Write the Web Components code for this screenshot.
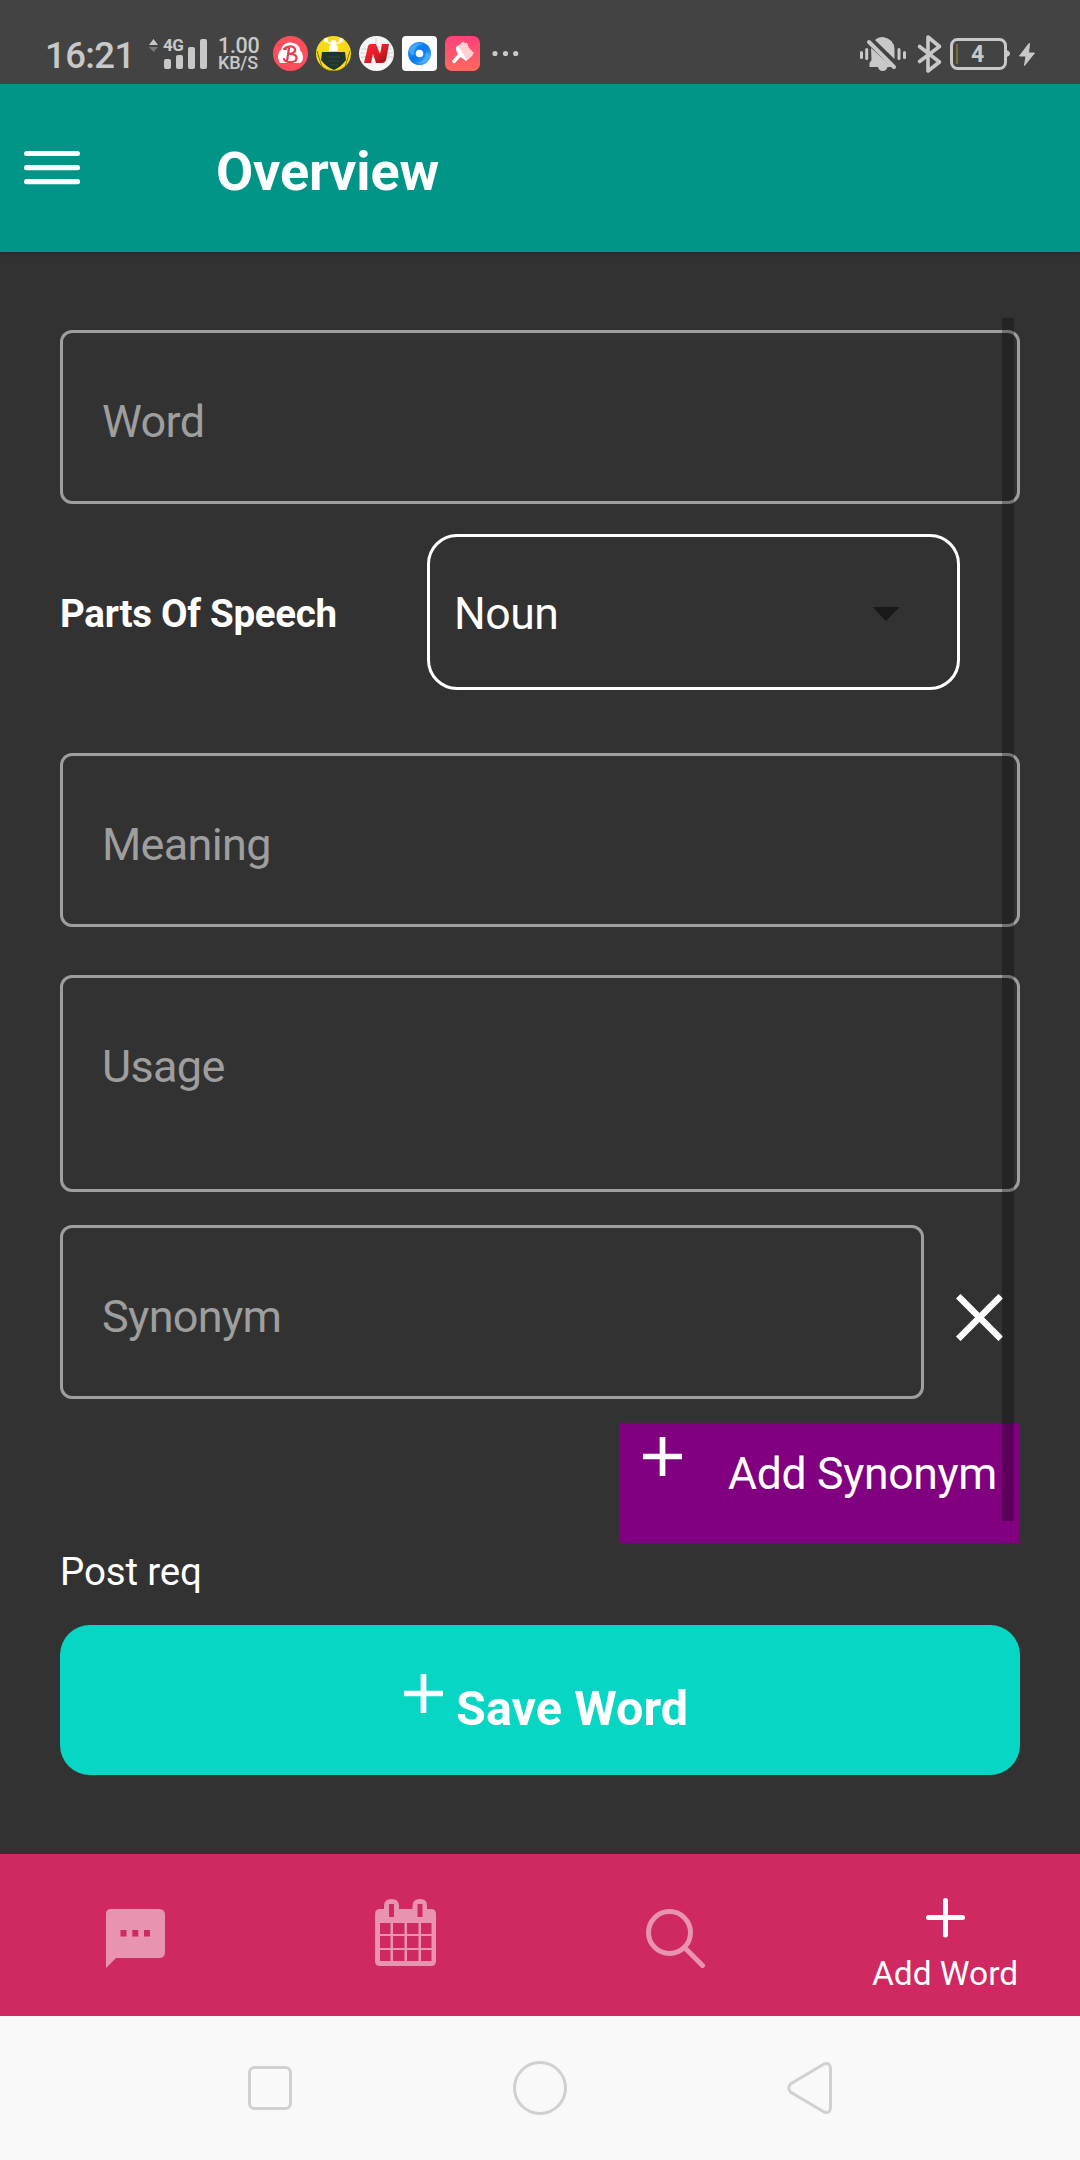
<!DOCTYPE html>
<html lang="en">
<head>
<meta charset="utf-8">
<title>Overview</title>
<style>
body{margin:0;width:1080px;height:2160px;overflow:hidden;background:#323232;font-family:Roboto,sans-serif;color:#fff}
</style>
</head>
<body>
<word-app></word-app>
<script>
const define = (name, html) => customElements.define(name, class extends HTMLElement {
  constructor() {
    super();
    const t = document.createElement('template');
    t.innerHTML = '<style>:host{display:block;box-sizing:border-box}*{box-sizing:border-box}svg{display:block;flex:none}</style>' + html;
    this.attachShadow({mode: 'open'}).append(t.content.cloneNode(true));
  }
});

define('status-bar', `
<style>
:host{display:flex;height:84px;background:#434343;color:#c8c8c8;font-weight:500}
span{display:block;white-space:nowrap;flex:none}
.time{width:102px;margin-left:45px;font-size:36.500px;line-height:36px;padding-top:38px;letter-spacing:-.6px}
.net{display:flex;flex-direction:column;width:50px;padding-top:37px}
.net .a{font-size:21.500px;line-height:17px;height:17px;letter-spacing:-.3px}
.net .b{font-size:18px;line-height:16px;margin-top:1px;letter-spacing:-.2px}
.sig{display:grid;width:71px}
.sig>*{grid-area:1/1}
.g4{font-size:17px;font-weight:700;line-height:18px;padding:36px 0 0 16px;letter-spacing:-.5px}
.bat{display:grid;width:66px;margin-left:auto}
.bat>*{grid-area:1/1}
.bat span{font-size:23px;font-weight:700;line-height:24px;padding:43px 5px 0 0;width:66px;text-align:center}
.right{display:flex;margin-left:auto}
</style>
<span class="time">16:21</span>
<div class="sig">
<svg width="71" height="84" viewBox="147 0 71 84"><path d="M149 45l4.500-6 4.500 6z" fill="#c8c8c8"/><path d="M149 47h9l-4.500 5z" fill="#777"/><g fill="#c8c8c8"><rect x="164" y="59" width="7" height="10" rx="2"/><rect x="176" y="55" width="7" height="14" rx="2"/><rect x="188" y="47" width="7" height="22" rx="2"/><rect x="200" y="39" width="7" height="30" rx="2"/></g></svg>
<span class="g4">4G</span></div>
<div class="net"><span class="a">1.00</span><span class="b">KB/S</span></div>
<svg width="262" height="84" viewBox="268 0 262 84">
<defs>
<linearGradient id="p" x1="0" y1="0" x2="0" y2="1"><stop stop-color="#ff417b"/><stop offset="1" stop-color="#ff6a5d"/></linearGradient>
<linearGradient id="n" x1="0" y1="0" x2="1" y2="1"><stop stop-color="#f32835"/><stop offset=".5" stop-color="#e51d27"/><stop offset="1" stop-color="#8d1018"/></linearGradient>
<linearGradient id="o" x1="0" y1="0" x2="1" y2="1"><stop stop-color="#2d9bf8"/><stop offset=".5" stop-color="#0878ee"/><stop offset="1" stop-color="#49b7fb"/></linearGradient>
<clipPath id="c"><circle cx="333.500" cy="53.500" r="17.500"/></clipPath>
</defs>
<circle cx="290.500" cy="53.500" r="17.500" fill="#ff4d5b"/>
<path d="M280 63C276 57 279 51 281 50C283 42 290 41 296 44C299 46 300 48 300 50C304 54 304 61 300 63Z" fill="#fff"/>
<path d="M284 49C288 45 294 46 295 49C296 53 291 54 288 54C294 53 298 56 296 60C294 63 285 63 284 59M289 48L287 61M284 49h2" fill="none" stroke="#e34150" stroke-width="2.200" stroke-linecap="round"/>
<circle cx="333.500" cy="53.500" r="17.500" fill="#f8da18"/>
<g clip-path="url(#c)"><path d="M322 52H345L346 60Q341 67 334 70Q326 67 321 60Z" fill="#20352d"/><path d="M327 57h13M328 61h11M330 65h8" stroke="#344c3f" stroke-width="1.200"/><path d="M317 51L322 67Q327 71 334 71Q341 71 345 67L350 51" fill="none" stroke="#7d7420" stroke-width="1"/><path d="M329 51v-4l2-3v-3q2.500-2 5 0v3l2 3v4z" fill="#fff"/><path d="M325 40l4 3h10l4-3" fill="none" stroke="#fff" stroke-width="1.300"/><circle cx="326" cy="40" r="2.200" fill="#fff"/><circle cx="341" cy="40" r="2.200" fill="#fff"/></g>
<circle cx="376.500" cy="53.500" r="17.500" fill="#f5f5f5"/><path d="M361 49h6M360 53h5M361 57h5M385 49h7M387 53h7M386 57h7M376 38v6" stroke="#ddd" stroke-width="1.500"/>
<path d="M364 63L368 46Q368.500 44 371 44H376L380 54L382 44H389L386 60Q385 63 382 63H376L373 54L371 63Z" fill="url(#n)"/>
<rect x="402" y="36" width="35" height="35" rx="4" fill="#fbfbfb"/><circle cx="419.500" cy="53.500" r="11.500" fill="url(#o)"/><path d="M409 50Q414 41 423 44Q414 45 414 55Q410 56 409 50M430 57Q426 65 417 63Q425 62 426 53Q430 52 430 57" fill="#65bdff" opacity=".55"/><circle cx="419.500" cy="53.500" r="3.800" fill="#fff"/>
<rect x="445" y="36" width="35" height="35" rx="7" fill="url(#p)"/>
<path d="M456 47L461 44L473 55L466 61L460.500 57L455 63Q453 64 452 61L458 54L456 50Z" fill="#fff"/><path d="M458 46L463 41.500L464.500 43L467 43L469 48L474 53L467 60Z" fill="#ffd0d4"/>
<g fill="#c8c8c8"><circle cx="495" cy="53.500" r="2.600"/><circle cx="505.500" cy="53.500" r="2.600"/><circle cx="515.700" cy="53.500" r="2.600"/></g>
</svg>
<div class="right">
<svg width="92" height="84" viewBox="855 0 92 84"><g fill="#c8c8c8"><rect x="860" y="51" width="3" height="8" rx="1.500"/><rect x="865.200" y="48" width="3" height="12" rx="1.500"/><rect x="897.500" y="48" width="3" height="12" rx="1.500"/><rect x="903" y="51" width="3" height="8" rx="1.500"/>
<path d="M875 40Q878 37 883 37Q894 39 894.500 49V59Z"/><path d="M871 48L892 67H887.500Q886.500 71 882.500 71Q879 71 878 67H869.500V63L871.500 60Z"/></g><path d="M869 42L894 67" stroke="#c8c8c8" stroke-width="4" stroke-linecap="round"/>
<path d="M919.500 46.500L939.500 62L928 71V37L939.500 46.500L919.500 61.500" fill="none" stroke="#c8c8c8" stroke-width="3.600" stroke-linejoin="round" stroke-linecap="round"/></svg>
<div class="bat"><svg width="66" height="84" viewBox="947 0 66 84"><rect x="951.500" y="39.500" width="54" height="29" rx="6" fill="none" stroke="#c8c8c8" stroke-width="3"/><path d="M1006 50q4 1 4 3.500t-4 3.500z" fill="#c8c8c8"/><path d="M957 44v20" stroke="#7d6c31" stroke-width="2"/></svg><span>4</span></div>
<svg width="67" height="84" viewBox="1013 0 67 84"><path d="M1029 43.500L1019.500 56H1026L1024.500 65.500L1034.500 53H1028.500L1029.500 43.500Z" fill="#c8c8c8" stroke="#c8c8c8" stroke-linejoin="round"/></svg>
</div>`);

define('app-header', `
<style>
:host{display:flex;height:168px;background:#009587;padding-left:24px;box-shadow:0 3px 4px -1px #0003;position:relative}
svg{margin-top:67px}
h1{margin:56px 0 0 136px;font-size:54px;letter-spacing:-.15px;line-height:64px;font-weight:700;white-space:nowrap}
</style>
<svg width="56" height="34"><g fill="#fff"><rect width="56" height="5" rx="2.500"/><rect y="14" width="56" height="5.300" rx="2.500"/><rect y="28" width="56" height="5.300" rx="2.500"/></g></svg>
<h1><slot></slot></h1>`);

define('outlined-field', `
<style>
:host{height:174px;border:3px solid #9e9e9e;border-radius:12px;padding:61px 0 0 39px;color:#9e9e9e;font-size:45px;letter-spacing:-.68px;line-height:56px}
</style><slot></slot>`);

define('select-field', `
<style>
:host{display:flex;align-items:center;justify-content:space-between;width:533px;height:156px;border:3px solid #fff;border-radius:30px;padding:4px 56px 0 24px;font-size:44.500px;letter-spacing:-.45px;line-height:52px}
svg{margin-top:2px}
</style><slot></slot><svg width="30" height="17" viewBox="0 1 30 17"><path d="M.5 0h29L15 15z" fill="#191919"/></svg>`);

define('plus-icon', `
<svg width="39" height="39"><path d="M0 19.500H39M19.500 0V39" stroke="#fff" stroke-width="5.700"/></svg>`);

define('word-form', `
<style>
:host{position:relative;height:1602px;padding:78px 60px 0;display:flex;flex-direction:column;align-items:stretch}
.row{display:flex}
.speech{height:156px;margin:30px 0 63px;align-items:center;padding-right:60px;justify-content:space-between}
b{font-size:38.500px;letter-spacing:-.28px;line-height:46px;padding-top:4px}
.usage{height:217px;margin:48px 0 33px}
.syn{align-items:center;gap:32px}
.syn outlined-field{width:864px}
.add{align-self:flex-end;width:401px;height:120px;margin-top:24px;background:#800080;padding:14px 0 0 24px}
.add span{font-size:44.500px;letter-spacing:-.3px;line-height:52px;margin:11px 0 0 46px;white-space:nowrap}
.post{font-size:38.500px;letter-spacing:-.15px;line-height:46px;margin-top:6px}
.save{height:150px;margin-top:30px;border-radius:30px;background:#07d6c5;padding:49px 0 0 344px}
.save span{font-size:48.500px;letter-spacing:.05px;font-weight:700;line-height:58px;margin:6px 0 0 13px;white-space:nowrap}
.bar{position:absolute;left:1002px;top:66px;width:12px;height:1203px;background:rgba(0,0,0,.28)}
</style>
<outlined-field>Word</outlined-field>
<div class="row speech"><b>Parts Of Speech</b><select-field>Noun</select-field></div>
<outlined-field>Meaning</outlined-field>
<outlined-field class="usage">Usage</outlined-field>
<div class="row syn"><outlined-field>Synonym</outlined-field><svg style="margin-top:10px" width="47" height="47"><path d="M2.200 2.200L44.800 44.800M44.800 2.200L2.200 44.800" stroke="#fff" stroke-width="6.500"/></svg></div>
<div class="row add"><plus-icon></plus-icon><span>Add Synonym</span></div>
<div class="post">Post req</div>
<div class="row save"><plus-icon></plus-icon><span>Save Word</span></div>
<div class="bar"></div>`);

define('tab-bar', `
<style>
:host{display:grid;grid-template-columns:repeat(4,1fr);height:162px;background:#d02860}
.t{display:flex;flex-direction:column;align-items:center}
.t span{font-size:33.500px;line-height:40px;margin-top:16px;white-space:nowrap}
</style>
<div class="t"><svg style="margin-top:55px" width="59" height="59"><path d="M5 0H53Q59 0 59 6V43Q59 49 53 49H10L0 59V5Q0 0 5 0ZM14.500 21v6.500h6V21ZM26.300 21v6.500h6V21ZM38 21v6.500h6V21Z" fill="#e893af" fill-rule="evenodd"/></svg></div>
<div class="t"><svg style="margin-top:45px" width="61" height="67"><path d="M5 10H9V7Q9 0 16.500 0T24 7V10H37.500V7Q37.500 0 45 0T52 7V10H56Q61 10 61 15V62Q61 67 56 67H5Q0 67 0 62V15Q0 10 5 10ZM14 5V18H19V5ZM42.500 5V18H47.500V5ZM5 24V35H15.500V24ZM18 24V35H29.500V24ZM32 24V35H43.500V24ZM46 24V35H56.500V24ZM5 37V49H15.500V37ZM18 37V49H29.500V37ZM32 37V49H43.500V37ZM46 37V49H56.500V37ZM5 51V62H15.500V51ZM18 51V62H29.500V51ZM32 51V62H43.500V51ZM46 51V62H56.500V51Z" fill="#e893af" fill-rule="evenodd"/></svg></div>
<div class="t"><svg style="margin-top:55px" width="59" height="59"><g fill="none" stroke="#e893af" stroke-width="5" stroke-linecap="round"><circle cx="23.500" cy="23.500" r="21"/><path d="M39.500 39.500L56.500 56.500"/></g></svg></div>
<div class="t"><svg style="margin-top:44px" width="39" height="40"><path d="M2.500 19.500H36.500M19.500 2.500V37" stroke="#fff" stroke-width="5" stroke-linecap="round"/></svg><span>Add Word</span></div>`);

define('system-nav', `
<style>:host{display:flex;align-items:center;height:144px;background:#f9f9f9;padding-left:248px}</style>
<svg width="44" height="44"><rect x="1.500" y="1.500" width="41" height="41" rx="5" fill="none" stroke="#d0d0d0" stroke-width="3"/></svg>
<svg style="margin-left:221px" width="54" height="54"><circle cx="27" cy="27" r="25.500" fill="none" stroke="#d0d0d0" stroke-width="3"/></svg>
<svg style="margin:0 0 1px 220px" width="45" height="52"><path d="M43.500 6V46Q43 52 37 50L3.500 30Q0 26 3.500 22L37 2Q43 0 43.500 6Z" fill="none" stroke="#d0d0d0" stroke-width="3"/></svg>`);

define('word-app', `
<status-bar></status-bar>
<app-header>Overview</app-header>
<word-form></word-form>
<tab-bar></tab-bar>
<system-nav></system-nav>`);
</script>
</body>
</html>
